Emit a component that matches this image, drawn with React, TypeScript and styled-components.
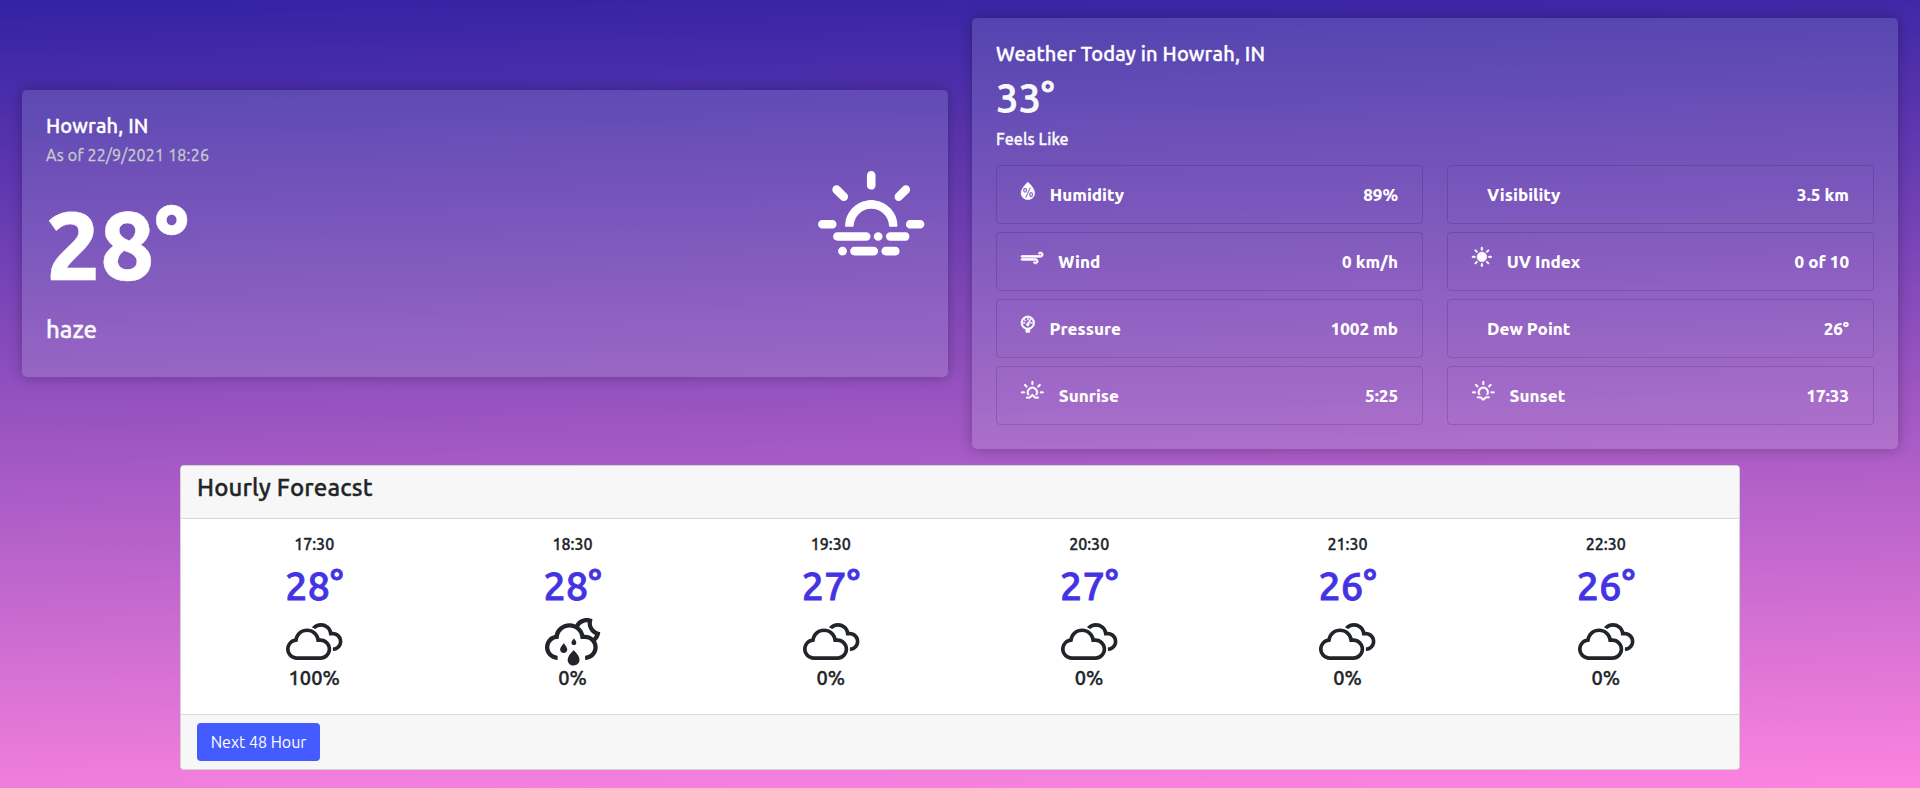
import React from 'react';
import styled, { createGlobalStyle } from 'styled-components';
import type { IconType } from 'react-icons';
import {
  WiBarometer,
  WiCloudy,
  WiDayHaze,
  WiDaySunny,
  WiHumidity,
  WiNightAltSprinkle,
  WiStrongWind,
  WiSunrise,
  WiSunset,
} from 'react-icons/wi';

const GlobalStyle = createGlobalStyle`
  *, *::before, *::after { box-sizing: border-box; }
  body {
    margin: 0;
    font-family: Ubuntu, "Noto Sans", sans-serif;
    font-size: 16px;
    line-height: 1.5;
    color: #212529;
  }
  h1, h2, h3, p {
    margin: 0;
    font-weight: 500;
    line-height: 1.2;
    -webkit-text-stroke: 0.35px currentColor;
  }
`;

const Page = styled.main`
  height: 788px;
  overflow: hidden;
  padding-top: 18px;
  background: linear-gradient(178.5deg, #3322a3 0%, #fd84df 100%);
`;

const Panels = styled.div`
  display: flex;
  align-items: center;
  gap: 24px;
  height: 431px;
  padding: 0 22px;
`;

const GlassCard = styled.section`
  flex: 1;
  padding: 24px;
  border-radius: 5px;
  color: #fff;
  background: rgba(208, 232, 232, 0.15);
  box-shadow: 0 0 14px rgba(0, 0, 0, 0.28);
`;

const CurrentCard = styled(GlassCard)`
  display: flex;
  justify-content: space-between;
  height: 287px;
`;

const TodayCard = styled(GlassCard)`
  height: 431px;
`;

const CardTitle = styled.h2`
  font-size: 20px;
  letter-spacing: 0.15px;
`;

const AsOf = styled.p`
  margin-top: 8px;
  font-weight: 400;
  color: #c9c9cb;
  letter-spacing: 0.2px;
`;

const BigTemp = styled.h1`
  margin-top: 22px;
  font-size: 96px;
  font-weight: 800;
`;

const Condition = styled.h3`
  margin-top: 14px;
  font-size: 24px;
  color: #f8f9fa;
`;

const HazeSlot = styled.div`
  display: flex;
  margin-top: 57px;
`;

const FeelsTemp = styled.h1`
  margin-top: 8px;
  font-size: 40px;
  color: #f8f9fa;
  -webkit-text-stroke-width: 0.8px;
`;

const FeelsLabel = styled.p`
  margin-top: 8px;
  color: #f8f9fa;
  letter-spacing: 0.1px;
`;

const Grid = styled.div`
  display: grid;
  grid-template-columns: 1fr 1fr;
  gap: 8px 24px;
  margin-top: 16px;
`;

const Metric = styled.div`
  display: flex;
  align-items: center;
  height: 59px;
  padding: 0 24px;
  border: 1px solid rgba(0, 0, 0, 0.14);
  border-radius: 4px;
  font-size: 17px;
  font-weight: 800;
`;

const MetricIcon = styled.span<{ $rise: number }>`
  display: flex;
  margin-right: 15px;
  margin-bottom: ${(p) => p.$rise}px;
`;

const MetricLabel = styled.span`
  flex: 1;
`;

const Forecast = styled.section`
  width: 1560px;
  height: 305px;
  margin: 16px auto 0;
  display: flex;
  flex-direction: column;
  border: 1px solid #d3d3d5;
  border-radius: 4px;
  background: #fff;
  overflow: hidden;
`;

const ForecastHeader = styled.header`
  height: 53px;
  padding: 8px 16px;
  background: #f7f7f7;
  border-bottom: 1px solid #d9d9d9;
`;

const ForecastTitle = styled.h3`
  font-size: 24px;
  letter-spacing: 0.15px;
`;

const Hours = styled.div`
  flex: 1;
  display: flex;
  padding: 16px 4px 0 4px;
`;

const Hour = styled.div`
  flex: 1;
  display: flex;
  flex-direction: column;
  align-items: center;
`;

const HourTime = styled.p`
  height: 19px;
`;

const HourTemp = styled.h1`
  margin-top: 8px;
  height: 48px;
  font-size: 40px;
  color: #4433e3;
  -webkit-text-stroke-width: 0.8px;
`;

const HourIcon = styled.div`
  display: flex;
  align-items: flex-end;
  height: 56px;
`;

const HourRain = styled.p`
  font-size: 20px;
`;

const ForecastFooter = styled.footer`
  height: 55px;
  padding: 8px 16px;
  background: #f7f7f7;
  border-top: 1px solid #d9d9d9;
`;

const NextButton = styled.button`
  width: 123px;
  height: 38px;
  padding: 0;
  border: 0;
  border-radius: 4px;
  font: inherit;
  color: #fff;
  background: #445cff;
`;

const IconFrame = styled.span<{ $w: number; $h: number; $disc: boolean }>`
  display: block;
  background: ${(p) => (p.$disc ? 'radial-gradient(circle, currentColor 4px, transparent 4.6px)' : 'none')};

  svg {
    display: block;
    width: ${(p) => p.$w}px;
    height: ${(p) => p.$h}px;
    overflow: visible;
  }
`;

type Glyph = { icon: IconType; box: [number, number, number, number] };

const glyphs = {
  haze: { icon: WiDayHaze, box: [4.37, 5, 21.24, 16.85] },
  humidity: { icon: WiHumidity, box: [7.56, 5.46, 14.82, 19.13] },
  wind: { icon: WiStrongWind, box: [3.1, 8.95, 23.8, 12.75] },
  pressure: { icon: WiBarometer, box: [7.69, 5.88, 14.65, 17.56] },
  uv: { icon: WiDaySunny, box: [4.37, 4, 21.24, 21.26] },
  sunrise: { icon: WiSunrise, box: [2.75, 3.11, 24.5, 18.76] },
  sunset: { icon: WiSunset, box: [2.88, 3.35, 24.25, 21.42] },
  cloudy: { icon: WiCloudy, box: [3.89, 5.35, 22.21, 18.74] },
  sprinkle: { icon: WiNightAltSprinkle, box: [4.11, 5.35, 21.77, 18.74] },
} satisfies Record<string, Glyph>;

type GlyphName = keyof typeof glyphs;

function WeatherIcon({ name, scale, bold = 0 }: { name: GlyphName; scale: number; bold?: number }) {
  const { icon: Icon, box } = glyphs[name];
  return (
    <IconFrame $w={box[2] * scale} $h={box[3] * scale} $disc={name === 'uv'}>
      <Icon viewBox={box.join(' ')} strokeWidth={bold} />
    </IconFrame>
  );
}

type MetricData = { label: string; value: string; icon?: GlyphName; rise?: number; bold?: number };

const metrics: MetricData[] = [
  { label: 'Humidity', value: '89%', icon: 'humidity', rise: 8, bold: 0.3 },
  { label: 'Visibility', value: '3.5 km' },
  { label: 'Wind', value: '0 km/h', icon: 'wind', rise: 8, bold: 0.8 },
  { label: 'UV Index', value: '0 of 10', icon: 'uv', rise: 9, bold: 0.6 },
  { label: 'Pressure', value: '1002 mb', icon: 'pressure', rise: 9, bold: 0.7 },
  { label: 'Dew Point', value: '26°' },
  { label: 'Sunrise', value: '5:25', icon: 'sunrise', rise: 12, bold: 0.3 },
  { label: 'Sunset', value: '17:33', icon: 'sunset', rise: 10, bold: 0.3 },
];

const hours: { time: string; temp: string; icon: GlyphName; rain: string }[] = [
  { time: '17:30', temp: '28°', icon: 'cloudy', rain: '100%' },
  { time: '18:30', temp: '28°', icon: 'sprinkle', rain: '0%' },
  { time: '19:30', temp: '27°', icon: 'cloudy', rain: '0%' },
  { time: '20:30', temp: '27°', icon: 'cloudy', rain: '0%' },
  { time: '21:30', temp: '26°', icon: 'cloudy', rain: '0%' },
  { time: '22:30', temp: '26°', icon: 'cloudy', rain: '0%' },
];

export default function App() {
  return (
    <Page>
      <GlobalStyle />
      <Panels>
        <CurrentCard>
          <div>
            <CardTitle>Howrah, IN</CardTitle>
            <AsOf>As of 22/9/2021 18:26</AsOf>
            <BigTemp>28°</BigTemp>
            <Condition>haze</Condition>
          </div>
          <HazeSlot>
            <WeatherIcon name="haze" scale={5.01} />
          </HazeSlot>
        </CurrentCard>
        <TodayCard>
          <CardTitle>Weather Today in Howrah, IN</CardTitle>
          <FeelsTemp>33°</FeelsTemp>
          <FeelsLabel>Feels Like</FeelsLabel>
          <Grid>
            {metrics.map((m) => (
              <Metric key={m.label}>
                <MetricIcon $rise={m.rise ?? 0}>
                  {m.icon && <WeatherIcon name={m.icon} scale={0.93} bold={m.bold} />}
                </MetricIcon>
                <MetricLabel>{m.label}</MetricLabel>
                <span>{m.value}</span>
              </Metric>
            ))}
          </Grid>
        </TodayCard>
      </Panels>
      <Forecast>
        <ForecastHeader>
          <ForecastTitle>Hourly Foreacst</ForecastTitle>
        </ForecastHeader>
        <Hours>
          {hours.map((h) => (
            <Hour key={h.time}>
              <HourTime>{h.time}</HourTime>
              <HourTemp>{h.temp}</HourTemp>
              <HourIcon>
                <WeatherIcon name={h.icon} scale={2.54} />
              </HourIcon>
              <HourRain>{h.rain}</HourRain>
            </Hour>
          ))}
        </Hours>
        <ForecastFooter>
          <NextButton>Next 48 Hour</NextButton>
        </ForecastFooter>
      </Forecast>
    </Page>
  );
}
